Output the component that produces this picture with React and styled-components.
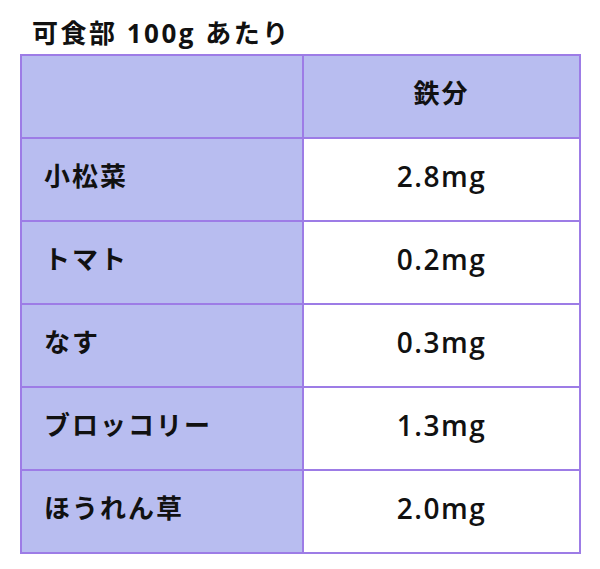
import React from 'react';
import styled, { createGlobalStyle } from 'styled-components';

const GlobalStyle = createGlobalStyle`
  body {
    margin: 0;
    background: #ffffff;
    font-family: "Open Sans", "Noto Sans CJK JP", sans-serif;
    color: #111111;
  }
`;

const COLORS = {
  border: '#9d7ce6',
  header: '#b8bdf0',
  white: '#ffffff',
};

const rows = [
  { name: '小松菜', iron: '2.8mg' },
  { name: 'トマト', iron: '0.2mg' },
  { name: 'なす', iron: '0.3mg' },
  { name: 'ブロッコリー', iron: '1.3mg' },
  { name: 'ほうれん草', iron: '2.0mg' },
];

const App = () => {
  return (
    <Page>
      <GlobalStyle />
      <Title>可食部 100g あたり</Title>
      <Table>
        <thead>
          <tr>
            <HeadCell />
            <HeadCell $center>鉄分</HeadCell>
          </tr>
        </thead>
        <tbody>
          {rows.map((row) => (
            <tr key={row.name}>
              <NameCell>{row.name}</NameCell>
              <ValueCell>{row.iron}</ValueCell>
            </tr>
          ))}
        </tbody>
      </Table>
    </Page>
  );
};

const Page = styled.main`
  padding: 17px 0 0 20px;
`;

const Title = styled.h1`
  margin: 0 0 5px 12px;
  font-size: 26px;
  line-height: 32px;
  font-weight: 700;
  letter-spacing: 2.5px;
`;

const Table = styled.table`
  width: 561px;
  border-collapse: collapse;
  table-layout: fixed;
  font-size: 26px;
  line-height: 1;
  font-weight: 700;
  letter-spacing: 2px;

  td,
  th {
    height: 83px;
    box-sizing: border-box;
    border: 2px solid ${COLORS.border};
    padding: 0 0 8px;
  }
`;

const HeadCell = styled.th`
  background: ${COLORS.header};
  font-weight: 700;
  text-align: ${(p) => (p.$center ? 'center' : 'left')};

  &:first-child {
    width: 282px;
  }
`;

const NameCell = styled.td`
  background: ${COLORS.header};
  padding-left: 22px !important;
`;

const ValueCell = styled.td`
  background: ${COLORS.white};
  text-align: center;
  font-size: 28px;
  font-weight: 600;
  letter-spacing: 1.5px;
`;

export default App;
